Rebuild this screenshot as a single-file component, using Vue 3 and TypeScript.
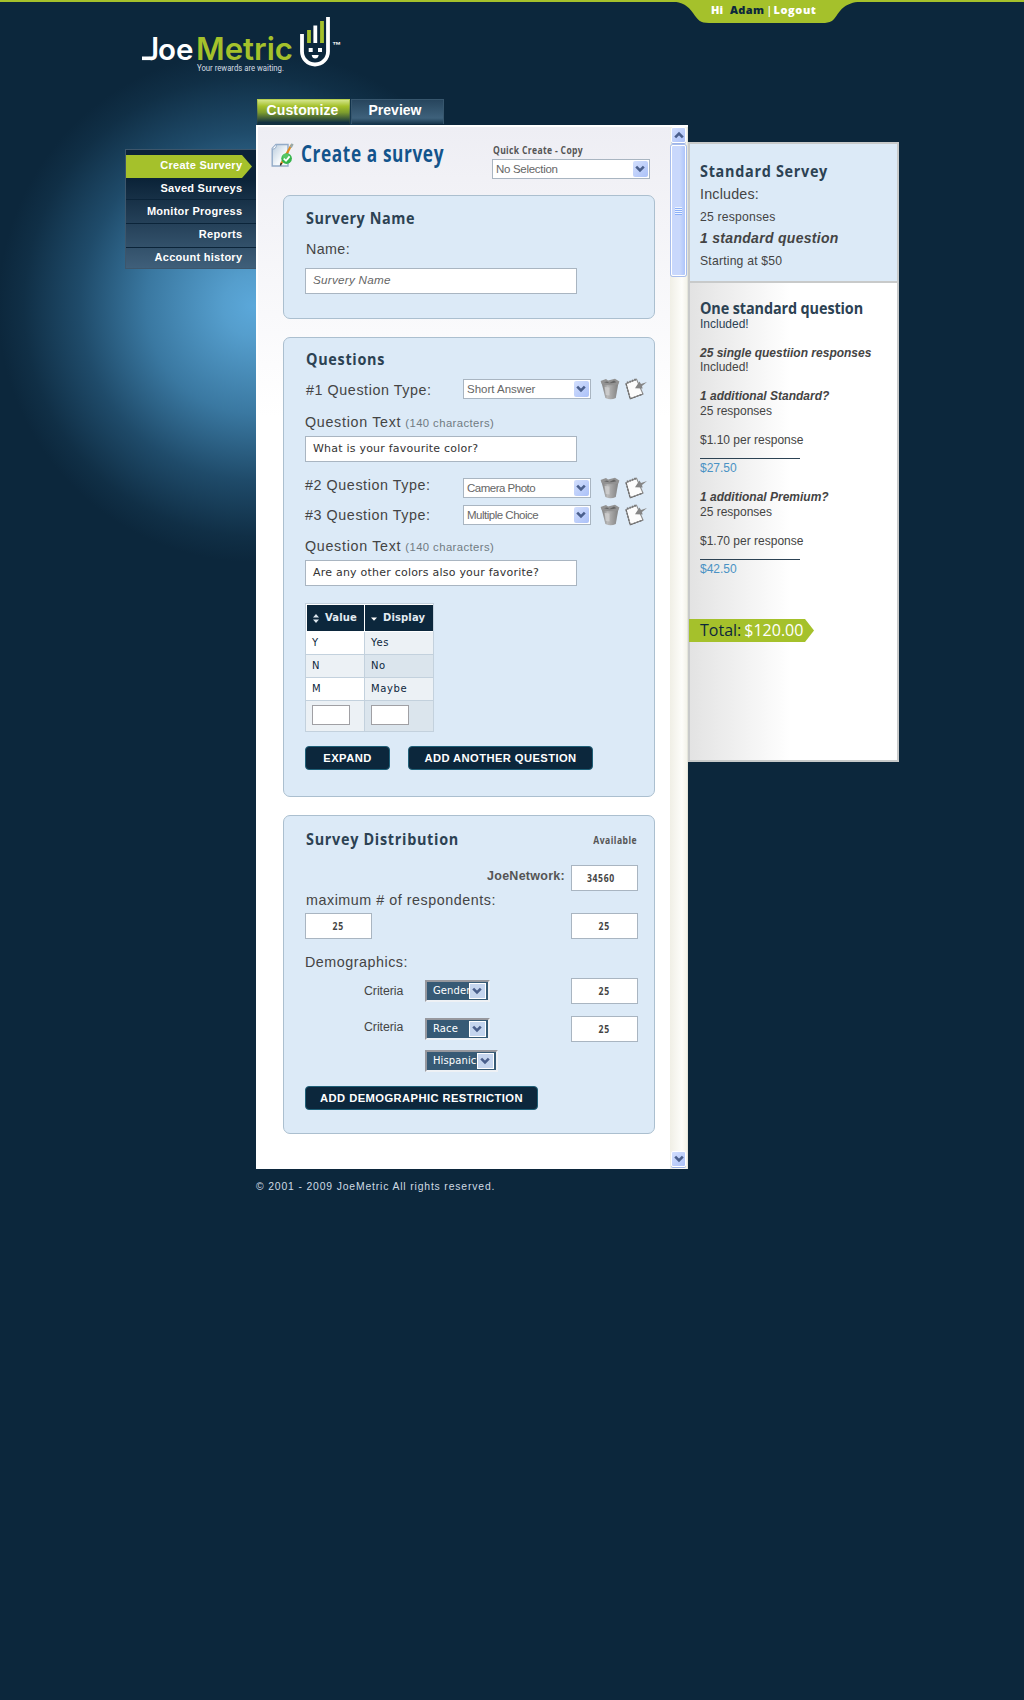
<script setup lang="ts">
interface Row { value: string; display: string }

const menu: string[] = ['Create Survery', 'Saved Surveys', 'Monitor Progress', 'Reports', 'Account history']
const rows: Row[] = [
  { value: 'Y', display: 'Yes' },
  { value: 'N', display: 'No' },
  { value: 'M', display: 'Maybe' },
]
</script>

<template>
  <div class="page">
    <svg class="defs" width="0" height="0">
      <defs>
        <linearGradient id="metal" x1="0" x2="1"><stop offset="0" stop-color="#777" /><stop offset=".35" stop-color="#b9b9b9" /><stop offset="1" stop-color="#808080" /></linearGradient>
        <linearGradient id="sheet" x1="0" x2="1" y2="1"><stop offset="0" stop-color="#b9cbdc" /><stop offset=".6" stop-color="#f4f8fb" /></linearGradient>
      </defs>
      <symbol id="trash" viewBox="0 0 20 22">
        <path d="M1.4 4 L18.6 4 L15.8 20 Q10.6 22.4 5.4 20 Z" fill="url(#metal)" />
        <path d="M4.6 9 L5.8 17 L9.5 17.6 V9.5 Z" fill="#cfcfcf" opacity=".8" />
        <path d="M.6 3 L6 1 L8 2.4 L15 .8 L19.4 3.4 L18.2 6.4 Q10 8.2 2 6.4 Z" fill="#929292" />
        <path d="M4 4.2 L7 3.4 L9.4 5 L14 2.6 L16.4 4.2 Q10 6.4 4 4.2Z" fill="#666" />
      </symbol>
      <symbol id="edit" viewBox="0 0 22 22">
        <path d="M1 5.5 L11.5 1.2 L18 16 L5.2 20.8 Z" fill="#fcfcfc" stroke="#8f8f8f" stroke-width="1.1" />
        <path d="M1 5.5 L5.2 20.8 L18 16" fill="none" stroke="#6d6d6d" stroke-width="1.3" stroke-dasharray="2.4 .8" />
        <path d="M2 4.8 L11 1.4" stroke="#777" stroke-width="2" stroke-dasharray="1.6 1" />
        <path d="M22 4 L16 6 L14.4 3.6 L10 10.2 L17.6 10.6 L17 8 Z" fill="#858585" />
      </symbol>
      <symbol id="chev" viewBox="0 0 10 8"><path d="M1.2 1.6 L5 5.4 L8.8 1.6" fill="none" stroke="#4a5f8c" stroke-width="2.6" /></symbol>
    </svg>

    <header class="header">
      <svg class="usertab" width="192" height="24" viewBox="0 0 192 24"><path d="M0 0 H192 V1.5 C176 2 171 8 166 15 C162 21 160 23 151 23 H38 C29 23 27 20 22 13 C17 6 12 2 0 1.5 Z" fill="#a5c12b" /></svg>
      <div class="userlinks"><span>Hi</span><b>Adam</b><i>|</i><span class="logout">Logout</span></div>
      <svg class="logo" width="204" height="62" viewBox="140 14 204 62">
        <text class="joe"><tspan x="151" y="55" class="jay">J</tspan><tspan x="158" y="60">oe</tspan></text>
        <text x="196" y="60" class="metric" textLength="97" lengthAdjust="spacingAndGlyphs">Metric</text>
        <path d="M142 58.3 H152.5" stroke="#fff" stroke-width="3.6" />
        <text x="197" y="71" class="tag" textLength="87" lengthAdjust="spacingAndGlyphs">Your rewards are waiting.</text>
        <path d="M302 34 V51.5 A13 13 0 0 0 328 51.5 V17" fill="none" stroke="#fff" stroke-width="3.8" />
        <path d="M309 30 V43 M322 21 V43" stroke="#a5c12b" stroke-width="3.8" />
        <path d="M315.3 25.5 V43" stroke="#fff" stroke-width="3.8" />
        <path d="M308.7 48 h4 v4 h-4z M318 48 h4 v4 h-4z M311.7 55 h7 q-.6 3.6 -3.5 3.6 t-3.5 -3.6z" fill="#fff" />
        <text x="332" y="47.5" class="tm">™</text>
      </svg>
      <nav class="tabs"><a class="tab on"><span>Customize</span></a><a class="tab preview"><span>Preview</span></a></nav>
    </header>

    <div class="body">
      <nav class="menu">
        <a v-for="(label, i) in menu" :key="label" :class="['mi', 'm' + i]">{{ label }}</a>
      </nav>

      <main class="panel">
        <div class="content">
          <div class="top">
            <svg class="doc" width="24" height="25" viewBox="0 0 24 25">
              <path d="M5 1.5 H17 V23 H1.2 V5.5 Z" fill="url(#sheet)" stroke="#93abc8" stroke-width="1.4" />
              <path d="M1.2 6 Q5.5 6.5 5.4 1.5" fill="#fff" stroke="#93abc8" />
              <path d="M20.5 2 L10 21" stroke="#e08a1e" stroke-width="2.2" /><path d="M21.6 .8 L19.6 4.4" stroke="#9aa" stroke-width="2.4" /><path d="M10.4 20 L9.4 22.6" stroke="#222" stroke-width="1.4" />
              <circle cx="15.6" cy="15.6" r="5.3" fill="#35b44a" /><circle cx="15" cy="14" r="3.6" fill="#6fd47c" opacity=".6" />
              <path d="M12.8 15.6 L15 17.8 L18.6 13.4" fill="none" stroke="#fff" stroke-width="1.7" />
            </svg>
            <h1><span>Create a survey</span></h1>
            <div class="quick">
              <div class="qlabel"><span>Quick Create - Copy</span></div>
              <div class="sel wide"><span>No Selection</span><i><svg width="10" height="8"><use href="#chev" /></svg></i></div>
            </div>
          </div>

          <section class="card c1">
            <h2>Survery Name</h2>
            <p class="lab name">Name:</p>
            <div class="inp ph">Survery Name</div>
          </section>

          <section class="card c2">
            <h2>Questions</h2>
            <div class="qrow r1"><p class="lab">#1 Question Type:</p><div class="sel short"><span>Short Answer</span><i><svg width="10" height="8"><use href="#chev" /></svg></i></div><svg width="20" height="22"><use href="#trash" /></svg><svg width="22" height="22"><use href="#edit" /></svg></div>
            <p class="lab qt">Question Text<small>(140 characters)</small></p>
            <div class="inp px">What is your favourite color?</div>
            <div class="qrow r2"><p class="lab">#2 Question Type:</p><div class="sel"><span>Camera Photo</span><i><svg width="10" height="8"><use href="#chev" /></svg></i></div><svg width="20" height="22"><use href="#trash" /></svg><svg width="22" height="22"><use href="#edit" /></svg></div>
            <div class="qrow r3"><p class="lab">#3 Question Type:</p><div class="sel"><span>Multiple Choice</span><i><svg width="10" height="8"><use href="#chev" /></svg></i></div><svg width="20" height="22"><use href="#trash" /></svg><svg width="22" height="22"><use href="#edit" /></svg></div>
            <p class="lab qt q2">Question Text<small>(140 characters)</small></p>
            <div class="inp px">Are any other colors also your favorite?</div>
            <div class="table">
              <div class="tr th">
                <div class="a"><svg width="6" height="9" viewBox="0 0 6 9"><path d="M0 3.4 L3 0 L6 3.4z M0 5.6 L3 9 L6 5.6z" fill="#dce6ee" /></svg><span>Value</span></div>
                <div class="b"><svg width="6" height="9" viewBox="0 0 6 9"><path d="M0 3.4 H6 L3 6.8z" fill="#fff" /></svg><span>Display</span></div>
              </div>
              <div v-for="r in rows" :key="r.value" class="tr"><div class="a">{{ r.value }}</div><div class="b">{{ r.display }}</div></div>
              <div class="tr last"><div class="a"><u /></div><div class="b"><u /></div></div>
            </div>
            <div class="btns"><a class="btn b1">EXPAND</a><a class="btn b2">ADD ANOTHER QUESTION</a></div>
          </section>

          <section class="card c3">
            <div class="trow"><h2>Survey Distribution</h2><div class="avail"><span>Available</span></div></div>
            <div class="jrow"><b>JoeNetwork:</b><div class="num joenum"><span>34560</span></div></div>
            <p class="lab max">maximum # of respondents:</p>
            <div class="nrow"><div class="num"><span>25</span></div><div class="num"><span>25</span></div></div>
            <p class="lab demo">Demographics:</p>
            <div class="drow d1"><p>Criteria</p><div class="dsel"><span>Gender</span><i><svg width="10" height="8"><use href="#chev" /></svg></i></div><div class="num"><span>25</span></div></div>
            <div class="drow d2"><p>Criteria</p><div class="dsel"><span>Race</span><i><svg width="10" height="8"><use href="#chev" /></svg></i></div><div class="num"><span>25</span></div></div>
            <div class="dsel his"><span>Hispanic</span><i><svg width="10" height="8"><use href="#chev" /></svg></i></div>
            <a class="btn b3">ADD DEMOGRAPHIC RESTRICTION</a>
          </section>
        </div>
        <div class="scroll">
          <i class="sb up"><svg width="10" height="8"><use href="#chev" /></svg></i>
          <i class="thumb"><em /></i>
          <i class="sb"><svg width="10" height="8"><use href="#chev" /></svg></i>
        </div>
      </main>

      <aside class="side">
        <div class="plan">
          <h2>Standard Servey</h2>
          <p class="inc">Includes:</p>
          <p class="rs">25 responses</p>
          <p class="sq">1 standard question</p>
          <p class="st">Starting at $50</p>
        </div>
        <div class="cost">
          <h3>One standard question</h3>
          <p class="navy gap">Included!</p>
          <p class="bi">25 single questiion responses</p>
          <p class="gap">Included!</p>
          <p class="bi">1 additional Standard?</p>
          <p class="gap">25 responses</p>
          <p>$1.10 per response</p>
          <p class="rule"><span /></p>
          <p class="blue gap">$27.50</p>
          <p class="bi">1 additional Premium?</p>
          <p class="gap">25 responses</p>
          <p>$1.70 per response</p>
          <p class="rule"><span /></p>
          <p class="blue">$42.50</p>
          <div class="total"><span>Total:</span><b>$120.00</b></div>
        </div>
      </aside>
    </div>
    <footer class="foot">© 2001 - 2009 JoeMetric All rights reserved.</footer>
  </div>
</template>

<style>
body { margin: 0; background: #0c273c; }
</style>
<style scoped>
.page { width: 1024px; height: 1700px; overflow: hidden; box-sizing: border-box; font-family: "Liberation Sans", Arial, sans-serif; font-size: 12px; color: #444; background: radial-gradient(circle 256px at 254px 306px, #5ba8da 0, #559ecd 12%, #3a78a1 42%, #1f4b6a 68%, #102f46 90%, #0c273c 100%), #0c273c; }
.page * { box-sizing: border-box; }
p, h1, h2, h3 { margin: 0; white-space: nowrap; }
i, em, u { font-style: normal; text-decoration: none; }
svg { display: block; flex: none; }
.defs { position: absolute; }
span { white-space: nowrap; }
.header { position: relative; height: 125px; border-top: 2px solid #a5c12b; padding-top: 12px; }
.usertab { position: absolute; left: 671px; top: -2px; }
.userlinks { position: absolute; left: 711px; top: -2px; display: flex; font: 800 11px/20px "Open Sans", sans-serif; color: #fff; }
.userlinks b { color: #0c273c; margin-left: 7px; font-weight: 800; letter-spacing: .35px; }
.userlinks i { margin: 0 1px 0 2px; font-weight: 600; }
.logout { letter-spacing: .6px; }
.logo { margin-left: 140px; }
.joe, .metric { font: 600 31.5px Inter, sans-serif; fill: #fff; }
.joe { font-size: 29.5px; }
.jay { font: bold 25px "Open Sans", sans-serif; }
.metric { fill: #a5c12b; }
.tag { font: 9.5px Roboto, sans-serif; fill: #d5dde3; }
.tm { font: bold 9px "Liberation Sans", sans-serif; fill: #fff; }
.tabs { display: flex; gap: 1px; margin: 23px 0 0 257px; height: 26px; }
.tab { width: 93px; height: 25px; border: 1px solid #37566d; border-bottom: 0; text-align: center; font-weight: bold; font-size: 14px; line-height: 21px; color: #fff; background: linear-gradient(#27455d, #3e617b 75%, #16344b); }
.tab.on { height: 26px; padding-right: 2px; letter-spacing: .13px; background: linear-gradient(#d3e48a, #a5c12b 25%, #7d9c2e 50%, #123040 90%); border-image: linear-gradient(#b9d14f, #0c273c) 1; }
.preview { padding-right: 5px; }
.body { display: flex; align-items: flex-start; padding-left: 125px; }
.menu { width: 131px; height: 120px; margin-top: 24px; border: 1px solid #3d566b; border-right: 0; padding-top: 5px; background: linear-gradient(#0b2338 25%, #3f5f7a); }
.mi { display: block; height: 23px; line-height: 20px; text-align: right; padding-right: 13.7px; color: #fff; font-weight: bold; font-size: 11px; letter-spacing: .27px; border-bottom: 1px solid #0b2439; }
.m0 { background: #a5c12b; width: 126px; padding-right: 9.7px; border: 0; clip-path: polygon(0 0, 116px 0, 100% 50%, 116px 100%, 0 100%); }
.m1 { height: 22px; }
.m2 { height: 24px; line-height: 22px; }
.m3 { height: 24px; line-height: 20px; }
.m4 { border: 0; line-height: 19px; }
.panel { width: 432px; height: 1044px; border: solid #fff; border-width: 2px 0 0 2px; background: linear-gradient(#eeeef4, #fff 290px); display: flex; }
.content { width: 412px; }
.top { display: flex; height: 68px; padding: 16px 0 0 13px; }
h1 { font: bold 23px/30px "Open Sans", sans-serif; color: #13548c; margin: -5px 0 0 6px; width: 191px; }
h1 span { display: inline-block; letter-spacing: .8px; transform: scaleX(.75); transform-origin: left; }
.qlabel { font: bold 11px/16px "Open Sans", sans-serif; color: #555; height: 16px; margin-top: -1px; padding-left: 1px; }
.qlabel span { display: inline-block; letter-spacing: .42px; transform: scaleX(.78); transform-origin: left; }
.quick { width: 158px; }
.sel { width: 128px; height: 20px; margin-top: 1px; border: 1px solid #a9b5c1; background: #fff; display: flex; justify-content: space-between; padding: 1px 1px 1px 3px; font-size: 11.5px; line-height: 16px; letter-spacing: -.5px; color: #666; }
.sel.short { letter-spacing: 0; }
.sel.wide { width: 158px; letter-spacing: -.3px; }
.sel i { width: 15px; height: 16px; border-radius: 2px; background: linear-gradient(135deg, #d3dffd, #abc1f8); padding: 4px 2px; }
.card { width: 372px; margin-left: 25px; border: 1px solid #abbfcf; border-radius: 7px; background: #dceaf7; padding-left: 21px; display: flex; flex-direction: column; align-items: flex-start; }
.c1 { height: 124px; }
.c2 { height: 460px; margin-top: 18px; }
.c3 { height: 319px; margin-top: 18px; }
h2 { font: bold 15.5px/20px "Open Sans", sans-serif; letter-spacing: .75px; color: #2c4253; margin: 12px 0 0 1px; transform: scaleX(.93); transform-origin: left; }
.c1 h2 { letter-spacing: .6px; }
.c2 h2 { margin-top: 11px; }
.lab { font-size: 14.3px; line-height: 20px; height: 20px; letter-spacing: .58px; color: #444; padding-left: 0; }
.name { margin-top: 11px; padding-left: 1px; letter-spacing: .38px; }
.inp { width: 272px; height: 26px; border: 1px solid #a9b5c1; background: #fff; padding-left: 7px; line-height: 24px; white-space: nowrap; }
.ph { margin-top: 9px; font-style: italic; font-size: 11.7px; letter-spacing: .25px; color: #666; line-height: 22px; }
.px { margin-top: 3px; font: 11px/24px "DejaVu Sans", sans-serif; letter-spacing: .22px; color: #333; }
.qrow { display: grid; grid-template-columns: 158px 137px 25px 22px; height: 22px; }
.r1 { margin-top: 9px; }
.r2 { margin-top: 15px; }
.r3 { margin-top: 5px; }
.r1 .lab { margin-top: 2px; padding-left: 1px; }
.r2 .lab { margin-top: -2px; }
.r3 .lab { margin-top: 1px; }
.qt { margin-top: 12px; margin-bottom: 1px; letter-spacing: .7px; }
.q2 { margin-top: 10px; }
.qt small { font-size: 11.3px; line-height: 1; letter-spacing: .42px; color: #707a82; margin-left: 4px; }
.table { width: 129px; height: 129px; margin-top: 17px; border: 1px solid #c3d1dd; font: 10px/22px "DejaVu Sans", sans-serif; letter-spacing: .6px; color: #0c273c; }
.tr { display: flex; height: 23px; border-bottom: 1px solid #c3d1dd; }
.tr .a { width: 59px; padding-left: 6px; background: #fff; border-right: 1px solid #c3d1dd; }
.tr .b { flex: 1; padding-left: 6px; background: #ecf1f5; }
.tr:nth-child(odd) .a { background: #ecf1f5; }
.tr:nth-child(odd) .b { background: #dbe5ed; }
.table .th { height: 28px; background: #fff; border: 0; padding: 1px 0 1px 1px; gap: 1px; font-weight: bold; letter-spacing: .13px; }
.table .th .a, .table .th .b { width: 58px; border: 0; background: #0c273c; color: #e3ebf2; display: flex; align-items: center; gap: 6px; }
.table .th .b { width: 68px; flex: none; }
.table .last { height: 30px; border: 0; }
.last u { display: block; width: 38px; height: 20px; margin-top: 4px; border: 1px solid #a0a0a4; background: #fff; }
.btns { display: flex; gap: 18px; margin-top: 14px; }
.btn { height: 24px; background: #0c273c; border: 1px solid #1f6078; border-radius: 4px; color: #fff; font-weight: bold; font-size: 11.2px; letter-spacing: .42px; line-height: 22px; text-align: center; }
.b1 { width: 85px; }
.b2 { width: 185px; }
.b3 { width: 233px; margin-top: 14px; }
.trow { width: 333px; height: 20px; display: flex; justify-content: space-between; margin-top: 13px; }
.trow h2 { margin-top: 0; }
.avail { font: bold 11px/22px "Open Sans", sans-serif; color: #555; padding-right: 1px; }
.avail span { display: inline-block; letter-spacing: .6px; transform: scaleX(.78); transform-origin: right; }
.jrow { width: 333px; display: flex; justify-content: flex-end; gap: 6px; margin-top: 16px; font-size: 12.5px; line-height: 22px; letter-spacing: .27px; color: #555; height: 26px; }
.num { width: 67px; height: 26px; border: 1px solid #a9b5c1; background: #fff; text-align: center; font: bold 11px/23px "Open Sans", sans-serif; color: #444; }
.num span { display: inline-block; letter-spacing: .85px; transform: scaleX(.78); }
.joenum { padding-right: 7px; }
.max { margin-top: -1px; padding-left: 1px; letter-spacing: .54px; }
.nrow { width: 333px; display: flex; justify-content: space-between; margin-top: 3px; }
.demo { margin-top: 13px; letter-spacing: .53px; }
.drow { display: grid; grid-template-columns: 61px 146px 67px; padding-left: 59px; height: 26px; font-size: 12.3px; line-height: 26px; letter-spacing: -.05px; }
.d1 { margin-top: 6px; }
.d2 { margin-top: 12px; }
.d2 p { margin-top: -2px; }
.dsel { width: 65px; height: 22px; margin-top: 2px; border: 2px solid; border-color: #97989e #eef1f5 #eef1f5 #97989e; background: #375a75; display: flex; justify-content: space-between; color: #fff; font: 10px/16px "DejaVu Sans", sans-serif; letter-spacing: .1px; padding: 1px 2px 1px 6px; }
.dsel span { width: 0; flex: 1; overflow: visible; }
.dsel i { width: 17px; height: 16px; border: 1px solid #fff; background: #c5d5ee; padding: 3px 2px; }
.his { width: 73px; margin: 8px 0 0 120px; }
.scroll { width: 18px; border-right: 1px solid #e5e6dc; background: linear-gradient(90deg, #f0efe6, #fdfdfa 70%, #f4f3ea); display: flex; flex-direction: column; padding: 0 0 2px; align-items: center; }
.sb { width: 15px; height: 16px; border: 1px solid #fff; border-radius: 2px; background: linear-gradient(135deg, #d3dffd, #abc1f8); padding: 3px 1.5px; box-shadow: 0 1px 0 #9db4e6; }
.up svg { transform: rotate(180deg); }
.thumb { width: 15px; height: 131px; margin: 2px 0 auto; border: 1px solid #fff; border-radius: 2px; background: linear-gradient(90deg, #c9d8fc 60%, #aec5fa); box-shadow: 0 0 0 1px #a8bdec; display: flex; align-items: center; justify-content: center; }
.thumb em { width: 7px; height: 8px; background: repeating-linear-gradient(#eef4fe 0 1px, #8cb0f8 1px 2px); }
.side { width: 211px; height: 620px; margin-top: 17px; border: 2px solid #c8caca; background: #fff; }
.plan { height: 139px; border-bottom: 2px solid #c8caca; background: #dceaf7; padding: 17px 0 0 10px; display: flex; flex-direction: column; align-items: flex-start; }
.plan h2 { margin: 0; }
.plan p { line-height: 20px; letter-spacing: .3px; }
.plan .rs, .plan .st { letter-spacing: .2px; font-size: 12.2px; }
.plan .inc { font-size: 14.3px; margin-top: 3px; letter-spacing: .2px; }
.plan .rs { margin-top: 3px; }
.plan .sq { font: italic bold 14px/20px "Liberation Sans", sans-serif; margin-top: 1px; }
.plan .st { margin-top: 3px; }
.cost { height: 477px; background: linear-gradient(90deg, #e3e3e3, #fff 100px); padding: 15px 0 0 10px; line-height: 14.45px; }
.cost p { height: 14.45px; }
.cost .gap { margin-bottom: 14.45px; }
h3 { font: bold 15.5px/20px "Open Sans", sans-serif; letter-spacing: -.12px; color: #2c4253; height: 19px; transform: scaleX(.93); transform-origin: left; }
.navy { color: #2c4253; }
.bi { font-weight: bold; font-style: italic; }
.rule span { display: block; width: 100px; border-top: 11px solid transparent; height: 12px; background: #2c4253; background-clip: padding-box; }
.cost .blue { color: #4a92c4; }
.total { width: 125px; height: 23px; background: #a5c12b; margin: 42px 0 0 -11px; padding-left: 11px; clip-path: polygon(0 0, 116px 0, 100% 50%, 116px 100%, 0 100%); font: 16px/23px "Open Sans", sans-serif; color: #0c273c; display: flex; gap: 3px; }
.total b { font-weight: 400; color: #fff; }
.foot { padding: 8px 0 0 256px; font-size: 10.4px; line-height: 20px; letter-spacing: .84px; color: #cfdbe4; white-space: nowrap; }
</style>
